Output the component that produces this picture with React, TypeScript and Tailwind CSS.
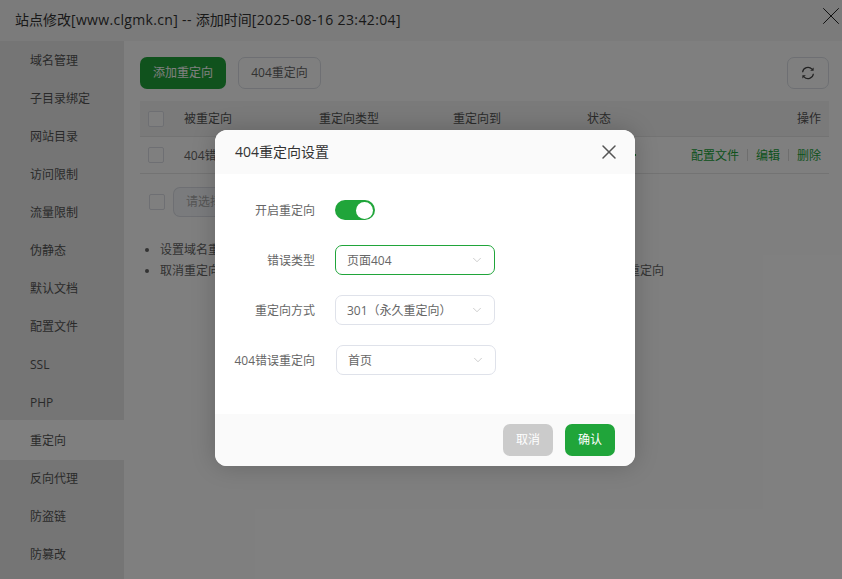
import { ChevronDown, X } from "lucide-react";

const menu = ["域名管理", "子目录绑定", "网站目录", "访问限制", "流量限制", "伪静态", "默认文档", "配置文件", "SSL", "PHP", "重定向", "反向代理", "防盗链", "防篡改"];

function Checkbox() {
  return <span className="block shrink-0 w-4 h-4 rounded-[2px] border border-[#dcdfe6] bg-white" />;
}

function RefreshIcon() {
  return (
    <svg width="14" height="14" viewBox="0 0 14 14" fill="none" className="text-[#444]">
      <path d="M1.6 6.2A5.4 5.4 0 0 1 11 3.2" stroke="currentColor" strokeWidth="1.2" />
      <path d="M12.4 7.8A5.4 5.4 0 0 1 3 10.8" stroke="currentColor" strokeWidth="1.2" />
      <path d="M12.6 1.4v3.4H9.2z" fill="currentColor" />
      <path d="M1.4 12.6V9.2h3.4z" fill="currentColor" />
    </svg>
  );
}

function Select({ value, active, wide }: { value: string; active?: boolean; wide?: boolean }) {
  return (
    <div className={`flex items-center justify-between w-40 h-[30px] pl-[11px] pr-[10px] rounded-[7px] border bg-white text-[12px] text-[#666] ${active ? "border-[#20a53a]" : "border-[#dfe2ea]"} ${wide ? "ml-px" : ""}`}>
      <span className="pt-px">{value}</span>
      <ChevronDown size={14} strokeWidth={1} className="text-[#aaa]" />
    </div>
  );
}

function FormRow({ label, children, className }: { label: string; children: React.ReactNode; className?: string }) {
  return (
    <div className={`flex items-center h-[30px] ${className ?? ""}`}>
      <div className="w-[100px] pt-[2px] text-right text-[12px] text-[#666] whitespace-nowrap">{label}</div>
      <div className="ml-5">{children}</div>
    </div>
  );
}

export default function App() {
  return (
    <div className="relative w-[842px] h-[579px] overflow-hidden bg-white text-[12px] text-[#666]" style={{ fontFamily: '"Open Sans", "Noto Sans CJK SC", sans-serif' }}>
      <div className="flex items-center justify-between h-[41px] pl-[15px] pr-0 bg-[#f6f6f6]">
        <span className="pb-[3px] text-[14px] text-[#333] whitespace-nowrap">
          站点修改<span className="tracking-[0.33px]">[www.clgmk.cn] -- </span>添加时间<span className="tracking-[0.38px]">[2025-08-16 23:42:04]</span>
        </span>
        <X size={30} strokeWidth={0.8} className="text-[#222] -mt-[9px] -mr-[4px]" />
      </div>

      <div className="flex h-[538px]">
        <div className="w-[124px] shrink-0 bg-[#eaeaea]">
          {menu.map((item) => (
            <div key={item} className={`flex items-center pl-[30px] pt-[2px] text-[12px] text-[#555] ${item === "重定向" ? "relative w-[140px] h-10 -my-px bg-white" : "h-[38px]"}`}>
              {item}
            </div>
          ))}
        </div>

        <div className="flex-1 pl-4 pr-[13px] pt-4">
          <div className="flex items-center justify-between">
            <div className="flex gap-3">
              <button className="w-[86px] h-8 rounded-[7px] bg-[#20a53a] text-[12px] text-white">添加重定向</button>
              <button className="w-[83px] h-8 rounded-[7px] border border-[#dcdfe6] bg-white text-[12px] text-[#666]">404重定向</button>
            </div>
            <button className="flex items-center justify-center w-[42px] h-8 rounded-[7px] border border-[#dcdfe6] bg-white">
              <RefreshIcon />
            </button>
          </div>

          <div className="mt-3 flex items-center h-9 bg-[#f5f5f5] border-b border-[#e6e6e6] px-2 text-[#555]">
            <Checkbox />
            <span className="w-[135px] ml-5">被重定向</span>
            <span className="w-[134px]">重定向类型</span>
            <span className="w-[134px]">重定向到</span>
            <span>状态</span>
            <span className="ml-auto">操作</span>
          </div>
          <div className="flex items-center h-[37px] border-b border-[#e6e6e6] px-2">
            <Checkbox />
            <span className="ml-5 w-[40px] pt-[2px] whitespace-nowrap">404错误</span>
            <span className="ml-[410px] w-[2px] h-[2px] bg-[#20a53a]" />
            <span className="ml-auto pt-[2px] text-[#20a53a]">配置文件</span>
            <span className="mx-2 w-px h-3 bg-[#ddd]" />
            <span className="pt-[2px] text-[#20a53a]">编辑</span>
            <span className="mx-2 w-px h-3 bg-[#ddd]" />
            <span className="pt-[2px] text-[#20a53a]">删除</span>
          </div>

          <div className="flex items-center mt-[13px] pl-[9px]">
            <Checkbox />
            <div className="ml-2 flex items-center w-[42px] h-[30px] pl-3 rounded-l-[7px] border border-r-0 border-[#dcdfe6] bg-[#f5f7fa] text-[#aaa] whitespace-nowrap">请选择</div>
          </div>

          <ul className="mt-[22px] pl-[20px] list-disc text-[12px] leading-[21px] text-[#666]">
            <li>设置域名重</li>
            <li>
              <div className="flex justify-between w-[504px]">
                <span>取消重定向</span>
                <span>重定向</span>
              </div>
            </li>
          </ul>
        </div>
      </div>

      <div className="absolute inset-0 bg-black/50" />

      <div className="absolute left-[215px] top-[130px] w-[420px] h-[336px] flex flex-col rounded-[12px] overflow-hidden bg-white shadow-[0_0_24px_rgba(0,0,0,0.2)]">
        <div className="flex items-center justify-between h-11 pl-5 pr-[14px] bg-[#fafafa]">
          <span className="pb-px text-[14px] text-[#333]">404重定向设置</span>
          <X size={24} strokeWidth={1.5} className="text-[#555]" />
        </div>
        <div className="flex-1 pt-[21px]">
          <FormRow label="开启重定向">
            <div className="flex items-center justify-end w-10 h-5 rounded-full bg-[#20a53a] pr-px">
              <span className="w-[17px] h-[17px] mr-px rounded-full bg-white" />
            </div>
          </FormRow>
          <FormRow label="错误类型" className="mt-5"><Select value="页面404" active /></FormRow>
          <FormRow label="重定向方式" className="mt-5"><Select value="301（永久重定向）" /></FormRow>
          <FormRow label="404错误重定向" className="mt-5"><Select value="首页" wide /></FormRow>
        </div>
        <div className="flex items-center justify-end gap-3 h-[52px] pr-5 bg-[#fafafa]">
          <button className="w-[50px] h-8 rounded-[7px] bg-[#cbcbcb] text-[12px] text-white">取消</button>
          <button className="w-[50px] h-8 rounded-[7px] bg-[#20a53a] text-[12px] text-white">确认</button>
        </div>
      </div>
    </div>
  );
}
